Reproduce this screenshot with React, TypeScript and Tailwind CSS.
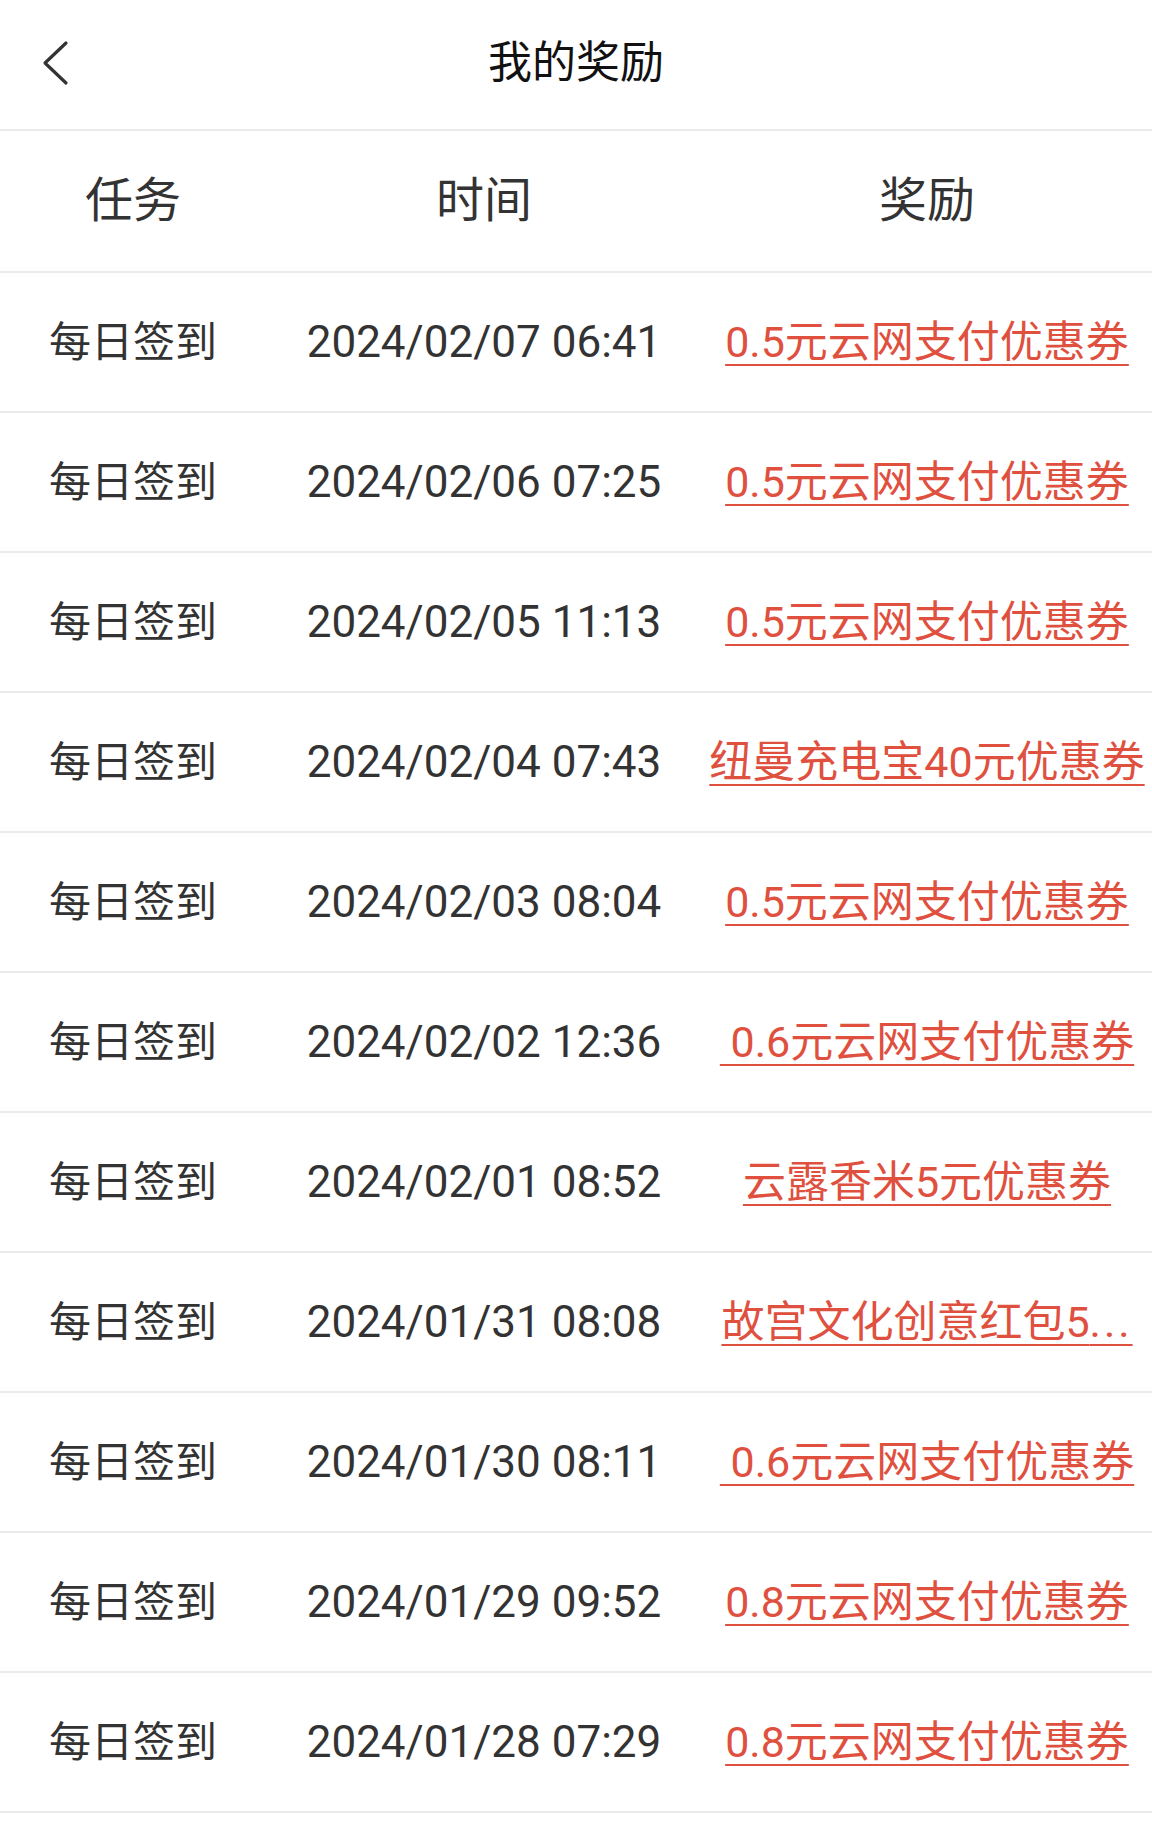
import React from 'react';

const ROWS = [
  { time: '2024/02/07 06:41', reward: '0.5元云网支付优惠券' },
  { time: '2024/02/06 07:25', reward: '0.5元云网支付优惠券' },
  { time: '2024/02/05 11:13', reward: '0.5元云网支付优惠券' },
  { time: '2024/02/04 07:43', reward: '纽曼充电宝40元优惠券' },
  { time: '2024/02/03 08:04', reward: '0.5元云网支付优惠券' },
  { time: '2024/02/02 12:36', reward: ' 0.6元云网支付优惠券' },
  { time: '2024/02/01 08:52', reward: '云露香米5元优惠券' },
  { time: '2024/01/31 08:08', reward: '故宫文化创意红包5...' },
  { time: '2024/01/30 08:11', reward: ' 0.6元云网支付优惠券' },
  { time: '2024/01/29 09:52', reward: '0.8元云网支付优惠券' },
  { time: '2024/01/28 07:29', reward: '0.8元云网支付优惠券' },
];

const FONT = "font-['Roboto','Noto_Sans_CJK_SC',sans-serif]";

function Reward({ text }: { text: string }) {
  // truncated names keep a loosely spaced ellipsis
  const cut = text.endsWith('...');
  const body = cut ? text.slice(0, -3) : text;
  return (
    <span className="whitespace-pre text-[43px] text-[#e0503f] underline decoration-2 underline-offset-[7px]">
      {body}
      {cut && <span className="tracking-[3px]">...</span>}
    </span>
  );
}

export default function App() {
  return (
    <div className={`min-h-[1827px] w-[1152px] bg-white ${FONT}`}>
      {/* top bar */}
      <div className="relative flex h-[131px] items-center justify-center border-b-2 border-[#ebebeb]">
        <button className="absolute left-[40px] top-[40px] p-0">
          <svg width="30" height="46" viewBox="0 0 30 46" fill="none">
            <path d="M26 3 L5 23 L26 43" stroke="#333" strokeWidth="3.2" strokeLinecap="round" strokeLinejoin="round" />
          </svg>
        </button>
        <h1 className="-mt-[4px] text-[44px] font-normal text-[#111]">我的奖励</h1>
      </div>

      {/* column headers */}
      <div className="grid h-[142px] grid-cols-[266px_436px_1fr] items-center border-b-2 border-[#ebebeb] text-[48px] text-[#333]">
        <div className="text-center">任务</div>
        <div className="text-center">时间</div>
        <div className="text-center">奖励</div>
      </div>

      {ROWS.map((r, i) => (
        <div
          key={i}
          className="grid h-[140px] grid-cols-[266px_436px_1fr] items-center border-b-2 border-[#ebebeb] text-[42px] text-[#333]"
        >
          <div className="text-center">每日签到</div>
          <div className="text-center text-[44px]">{r.time}</div>
          <div className="text-center">
            <Reward text={r.reward} />
          </div>
        </div>
      ))}
    </div>
  );
}
